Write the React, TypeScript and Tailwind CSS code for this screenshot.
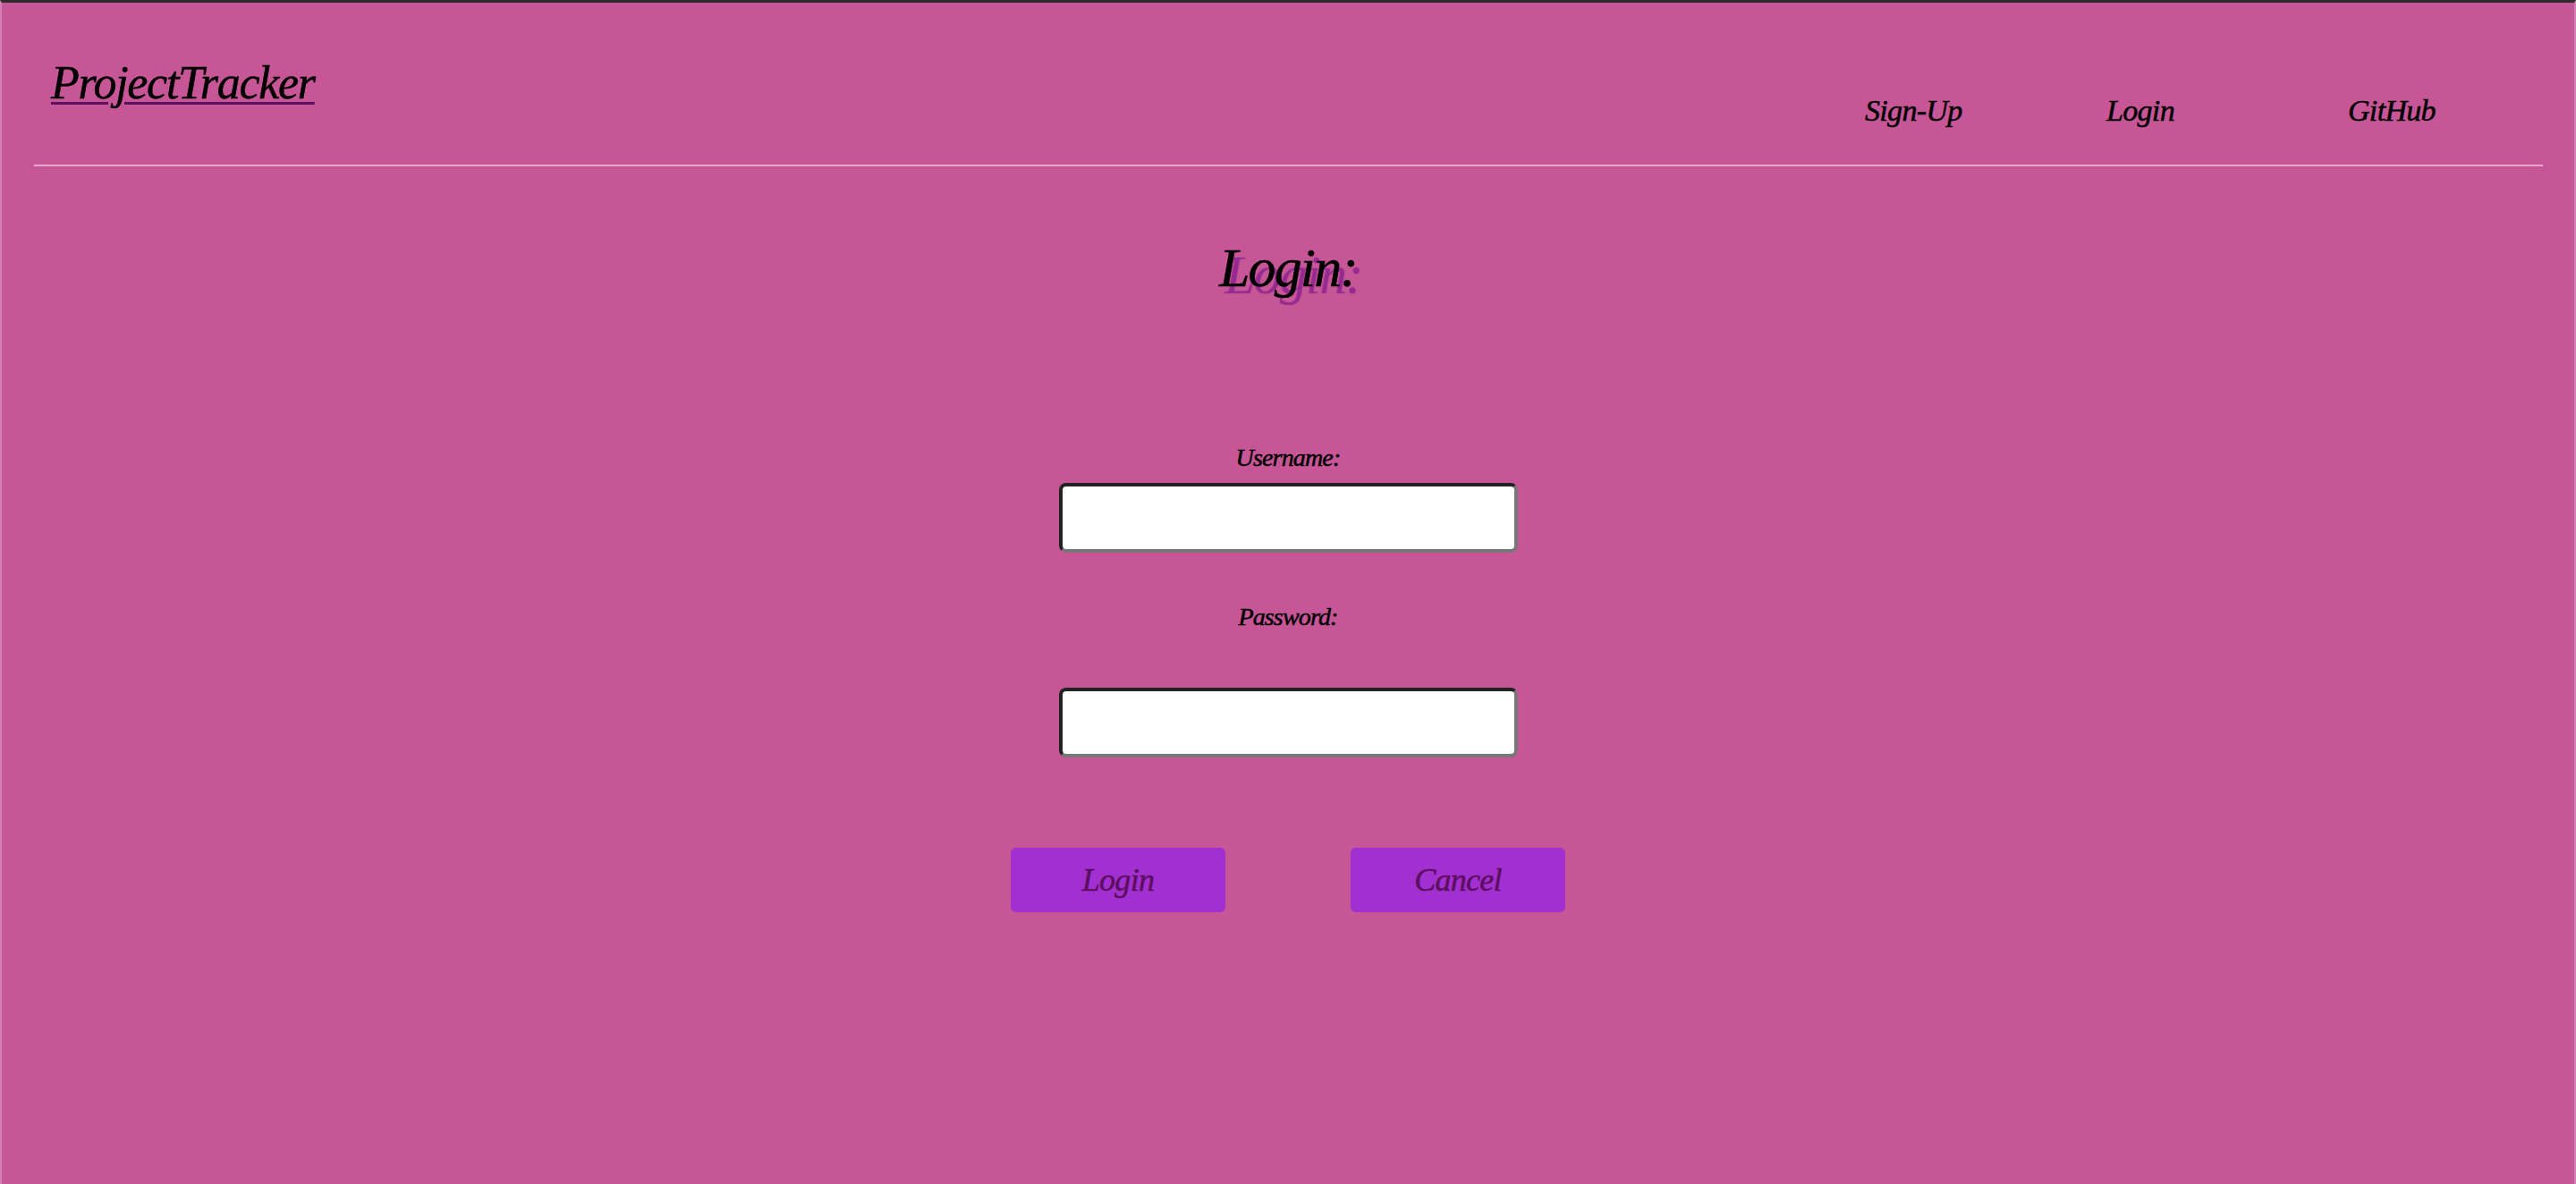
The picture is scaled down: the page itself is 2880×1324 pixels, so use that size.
import React from "react";

export default function App() {
  return (
    <div className="min-h-screen w-full bg-[#c65696] border-t-[3px] border-t-[#2d2d2d] border-l-2 border-l-[#d47fb2] border-r-2 border-r-[#d47fb2] font-['Liberation_Serif',serif] italic text-black [-webkit-text-stroke:0.5px_currentColor]">
      <header className="flex h-[181px] items-start">
        <a
          href="#"
          className="ml-[55px] mt-[64px] text-[52px] leading-none tracking-[-0.025em] underline decoration-[#5c1060] decoration-[3px] underline-offset-[4px]"
        >
          ProjectTracker
        </a>
        <nav className="ml-auto mt-[104px] flex w-[793px] text-[34px] leading-none tracking-[-0.02em]">
          <a href="#" className="w-[270px]">Sign-Up</a>
          <a href="#" className="w-[270px]">Login</a>
          <a href="#">GitHub</a>
        </nav>
      </header>
      <div className="ml-[36px] mr-[35px] h-[2px] bg-[#e9a7cf]" />
      <main className="flex flex-col items-center">
        <h1 className="mt-[82px] text-[62px] leading-none font-normal tracking-[-0.03em] [text-shadow:6px_8px_1px_#962a90]">
          Login:
        </h1>
        <label className="mt-[168px] text-[28px] leading-none tracking-[-0.03em]">Username:</label>
        <input
          type="text"
          className="mt-[14px] h-[78px] w-[513px] rounded-lg border-4 border-t-[#222] border-l-[#222] border-r-[#777] border-b-[#777] bg-white not-italic"
        />
        <label className="mt-[58px] text-[28px] leading-none tracking-[-0.03em]">Password:</label>
        <input
          type="password"
          className="mt-[65px] h-[78px] w-[513px] rounded-lg border-4 border-t-[#222] border-l-[#222] border-r-[#777] border-b-[#777] bg-white not-italic"
        />
        <div className="mt-[101px] flex gap-[140px]">
          <button className="flex h-[72px] w-[240px] items-center justify-center rounded-md bg-[#a22fd0] text-[36px] leading-none italic tracking-[-0.02em] text-[#5c0e5f]">
            Login
          </button>
          <button className="flex h-[72px] w-[240px] items-center justify-center rounded-md bg-[#a22fd0] text-[36px] leading-none italic tracking-[-0.02em] text-[#5c0e5f]">
            Cancel
          </button>
        </div>
      </main>
    </div>
  );
}
